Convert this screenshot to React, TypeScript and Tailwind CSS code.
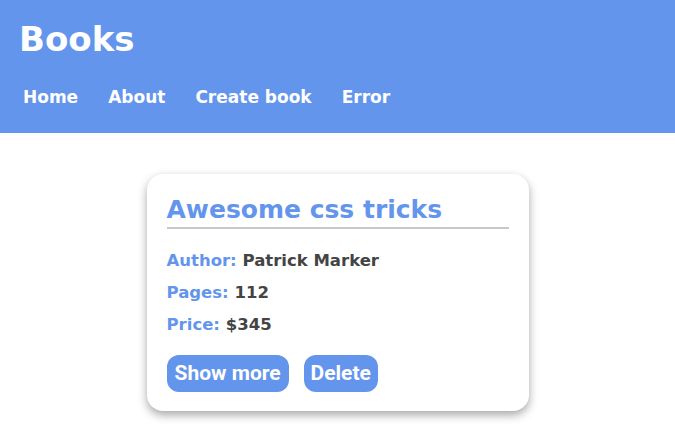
export default function App() {
  const font = { fontFamily: '"DejaVu Sans", "Open Sans", sans-serif' };
  return (
    <div className="min-h-screen bg-white" style={font}>
      <header className="bg-[#6495ed] h-[133px] pl-[19px] pt-[19px]">
        <h1 className="text-white font-bold text-[34px] leading-[40px]">Books</h1>
        <nav className="flex gap-[30px] mt-[26px] pl-[4px]">
          {["Home", "About", "Create book", "Error"].map((t) => (
            <a key={t} className="text-white font-bold text-[17px] leading-[24px]">{t}</a>
          ))}
        </nav>
      </header>
      <main className="flex justify-center pt-[41px]">
        <div className="w-[382px] rounded-[16px] bg-white shadow-[0_4px_10px_rgba(0,0,0,0.35)] px-[20px] pt-[20px] pb-[19px]">
          <h2 className="text-[#6495ed] font-bold text-[25px] leading-[32px] border-b-2 border-[#c8c8c8] pb-[1px]">Awesome css tricks</h2>
          <div className="mt-[20px] flex flex-col gap-[8px] text-[16.5px] leading-[24px] font-bold">
            <p><span className="text-[#6495ed]">Author:</span> <span className="text-[#444]">Patrick Marker</span></p>
            <p><span className="text-[#6495ed]">Pages:</span> <span className="text-[#444]">112</span></p>
            <p><span className="text-[#6495ed]">Price:</span> <span className="text-[#444]">$345</span></p>
          </div>
          <div className="flex gap-[15px] mt-[18px]">
            <button className="bg-[#6495ed] text-white font-bold text-[21px] h-[37px] px-[8px] rounded-[12px]" style={{ fontFamily: 'Roboto, "Liberation Sans", sans-serif' }}>Show more</button>
            <button className="bg-[#6495ed] text-white font-bold text-[21px] h-[37px] px-[7px] rounded-[12px]" style={{ fontFamily: 'Roboto, "Liberation Sans", sans-serif' }}>Delete</button>
          </div>
        </div>
      </main>
    </div>
  );
}
